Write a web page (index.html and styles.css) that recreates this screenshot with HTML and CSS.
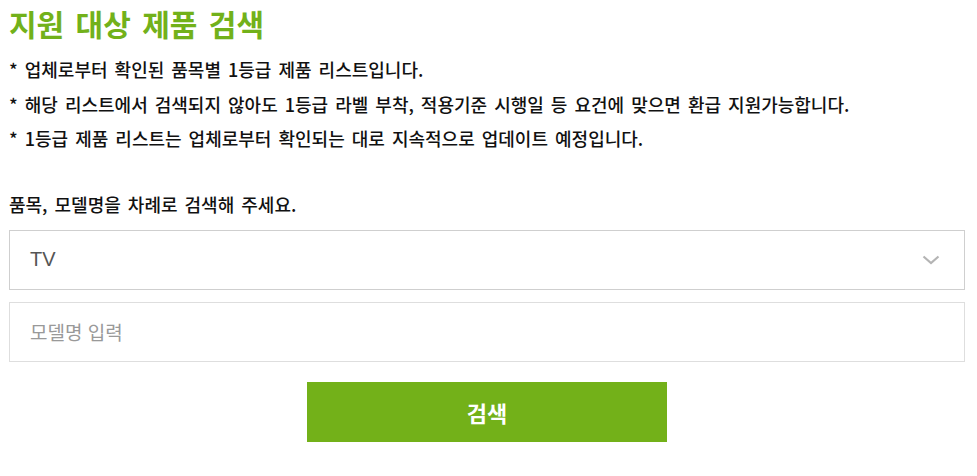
FILE: index.html
```html
<!DOCTYPE html>
<html lang="ko">
<head>
<meta charset="utf-8">
<link rel="stylesheet" href="styles.css">
</head>
<body>
<div class="page">
  <h1 class="title">지원 대상 제품 검색</h1>
  <ul class="notes">
    <li>* 업체로부터 확인된 품목별 1등급 제품 리스트입니다.</li>
    <li>* 해당 리스트에서 검색되지 않아도 1등급 라벨 부착, 적용기준 시행일 등 요건에 맞으면 환급 지원가능합니다.</li>
    <li>* 1등급 제품 리스트는 업체로부터 확인되는 대로 지속적으로 업데이트 예정입니다.</li>
  </ul>
  <p class="guide">품목, 모델명을 차례로 검색해 주세요.</p>
  <div class="form">
    <div class="select">
      <span class="select-value">TV</span>
      <svg class="chevron" width="18" height="10" viewBox="0 0 18 10"><path d="M1.5 1.5 L9 8 L16.5 1.5" fill="none" stroke="#b4b4b4" stroke-width="2.2"/></svg>
    </div>
    <div class="input"><span class="placeholder">모델명 입력</span></div>
    <div class="btn-row"><button class="btn">검색</button></div>
  </div>
</div>
</body>
</html>
```
FILE: styles.css
```css
html, body { margin: 0; padding: 0; background: #fff; }
body { font-family: "Noto Sans CJK KR", "Noto Sans", sans-serif; color: #111; }
.page { padding: 2px 0 0 9px; width: 956px; }
.title { margin: 0; font-size: 30px; font-weight: 700; color: #72b11a; line-height: 42px; word-spacing: 3px; }
.notes { list-style: none; margin: 8px 0 0; padding: 0; }
.notes li { font-size: 18px; font-weight: 500; line-height: 34.5px; word-spacing: 2px; }
.guide { margin: 31px 0 0; font-size: 18px; font-weight: 500; line-height: 34px; word-spacing: 2px; }
.form { display: flex; flex-direction: column; gap: 12px; margin-top: 9px; }
.select { box-sizing: border-box; height: 60px; border: 1px solid #cfcfcf; display: flex; align-items: center; justify-content: space-between; padding: 0 24px 0 20px; }
.select-value { font-family: "Liberation Sans", sans-serif; font-size: 20px; color: #555; }
.input { box-sizing: border-box; height: 60px; border: 1px solid #dedede; display: flex; align-items: center; padding: 0 20px; }
.placeholder { font-size: 19px; color: #999; }
.btn-row { display: flex; justify-content: center; margin-top: 8px; }
.btn { width: 360px; height: 60px; border: 0; background: #73b119; color: #fff; font-family: "Noto Sans CJK KR", sans-serif; font-size: 22px; font-weight: 700; }
```
